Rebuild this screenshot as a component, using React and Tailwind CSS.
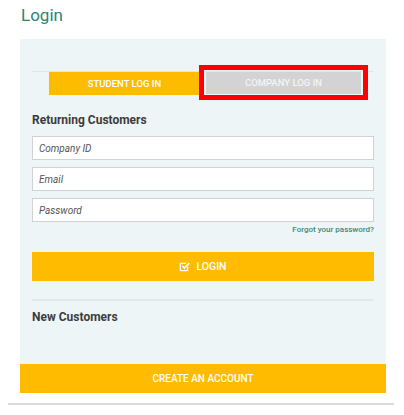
import React from "react";

const CheckSquare = () => (
  <svg width="11" height="11" viewBox="0 0 16 16" fill="none">
    <path
      d="M12.5 8.5V13a1 1 0 0 1-1 1H3a1 1 0 0 1-1-1V4.5a1 1 0 0 1 1-1h7"
      stroke="white"
      strokeWidth="2"
    />
    <path d="M5 7.5l2.8 2.8L15 3" stroke="white" strokeWidth="2.4" />
  </svg>
);

const Field = ({ placeholder, type = "text" }) => (
  <input
    type={type}
    placeholder={placeholder}
    className="block h-[24px] w-full border border-[#cfd3d5] bg-white px-[6px] text-[10px] italic text-[#444] placeholder:text-[#555] outline-none"
  />
);

export default function App() {
  return (
    <div
      className="w-[404px] h-[415px] bg-white"
      style={{ fontFamily: "Roboto, 'Liberation Sans', sans-serif" }}
    >
      <div className="h-[39px] pl-[21px] pt-[3px] text-[17px] leading-[24px] text-[#2b8578]">
        Login
      </div>

      <div className="mx-[20px] w-[366px] bg-[#edf5f7] px-[12px] pt-[32px] pb-[38px]">
        <div className="flex items-start border-t border-[#e1e7e9] pl-[17px]">
          <button className="block h-[23px] w-[151px] bg-[#ffbb00] text-[9.5px] font-medium uppercase leading-[23px] text-white">
            Student Log In
          </button>
          <div className="relative ml-[6px] h-[22px]">
            <button className="block h-[22px] w-[155px] bg-[#d3d3d3] text-[9.5px] font-medium uppercase leading-[22px] text-[#f4f4f4]">
              Company Log In
            </button>
            <div className="pointer-events-none absolute -left-[7px] -top-[7px] -right-[7px] -bottom-[6px] border-[5px] border-[#ff0000]"></div>
          </div>
        </div>

        <div className="mt-[16px] h-[18px] text-[12px] font-bold leading-[18px] text-[#3c3c3c]">
          Returning Customers
        </div>

        <div className="mt-[7px] flex flex-col gap-[7px]">
          <Field placeholder="Company ID" />
          <Field placeholder="Email" />
          <Field placeholder="Password" type="password" />
        </div>

        <div className="mt-[3px] h-[10px] text-right text-[8px] font-medium leading-[10px] text-[#3a8a7c]">
          Forgot your password?
        </div>

        <button className="mt-[17px] flex h-[29px] w-full items-center justify-center gap-[6px] bg-[#ffbb00] text-[10.5px] font-medium text-white">
          <CheckSquare />
          LOGIN
        </button>

        <div className="mt-[18px] h-[2px] bg-[#e2e8ea]"></div>

        <div className="mt-[7px] h-[18px] text-[12px] font-bold leading-[18px] text-[#3c3c3c]">
          New Customers
        </div>
      </div>

      <button className="mx-[20px] flex h-[29px] w-[366px] items-center justify-center bg-[#ffbb00] text-[10px] font-medium text-white">
        CREATE AN ACCOUNT
      </button>

      <div className="mx-[8px] mt-[10px] h-[2px] w-[386px] bg-[#dcdcdc]"></div>
    </div>
  );
}
